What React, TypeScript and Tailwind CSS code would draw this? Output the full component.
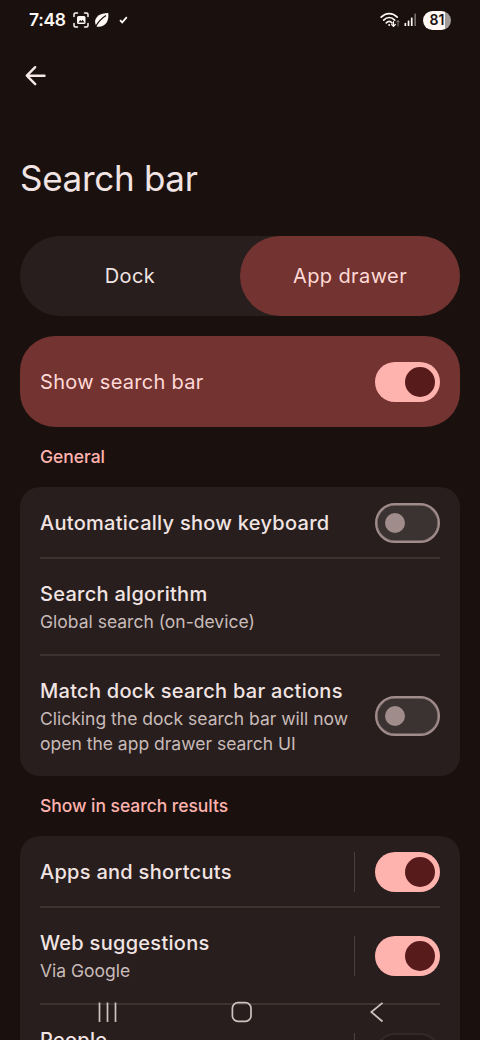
import type { ReactNode } from "react";

type ToggleState = "on" | "off" | "disabled";

function Toggle({ state }: { state: ToggleState }) {
  if (state === "on") {
    return (
      <span className="flex h-10 w-[65px] shrink-0 items-center justify-end rounded-full bg-[#ffb3ae] pr-[5px]">
        <span className="size-[30px] rounded-full bg-[#571b1b]" />
      </span>
    );
  }
  if (state === "disabled") {
    return <span className="h-10 w-[65px] shrink-0 rounded-full border-[2.5px] border-[#332928] bg-[#231918]" />;
  }
  return (
    <span className="flex h-10 w-[65px] shrink-0 items-center rounded-full border-2 border-[#a08c8a] bg-[#3b3331] pl-2 ring-[0.5px] ring-[#a08c8a] ring-inset">
      <span className="size-5 rounded-full bg-[#a08c8a]" />
    </span>
  );
}

function SettingRow({
  title,
  description,
  toggle,
  split = false,
}: {
  title: string;
  description?: string;
  toggle?: ToggleState;
  split?: boolean;
}) {
  return (
    <div className={`flex items-center justify-between ${description ? "py-5" : "box-content h-[69px] pt-px"}`}>
      <div className="w-[314px] shrink-0">
        <p className="text-[20px] font-[450] leading-[30px] tracking-[0.28px] text-[#f1e4e2]">{title}</p>
        {description && (
          <p className="text-[17.5px] leading-[25px] text-[#c9bbb9]">{description}</p>
        )}
      </div>
      {toggle && (
        <div className="-my-2 flex items-center gap-5">
          {split && <span className="h-10 w-px bg-[#4a403e]" />}
          <Toggle state={toggle} />
        </div>
      )}
    </div>
  );
}

function Card({ children }: { children: ReactNode }) {
  return (
    <div className="divide-y-2 divide-[#3d3331] rounded-[20px] bg-[#271e1d] px-5">{children}</div>
  );
}

function SectionLabel({ children }: { children: ReactNode }) {
  return (
    <h2 className="flex h-[60px] items-center pb-px pl-5 text-[17.5px] font-[450] leading-[25px] tracking-[-0.04px] text-[#ffb3ae]">
      {children}
    </h2>
  );
}

function StatusBar() {
  return (
    <div className="flex h-10 items-center justify-between pl-[29px] pr-[29px] text-[#fff8f5]">
      <div className="flex items-center">
        <span className="w-[37px] text-[17.5px] font-semibold leading-5 tracking-[-0.3px]">7:48</span>
        <svg className="ml-[7px]" width="16" height="16" viewBox="0 0 16 16" fill="none">
          <path
            d="M1 4.5V2.5Q1 1 2.5 1H4.5M11.500 1H13.500Q15 1 15 2.500V4.500M15 11.500V13.500Q15 15 13.500 15H11.500M4.500 15H2.500Q1 15 1 13.500V11.500"
            stroke="currentColor"
            strokeWidth="1.5"
            strokeLinecap="round"
          />
          <rect x="4" y="4" width="8.500" height="8" rx="1.500" fill="currentColor" />
          <path d="M5.300 10.500L7.300 8L8.500 9.200L9.700 7.800L11.500 10.500Z" fill="#1a110f" />
        </svg>
        <svg className="ml-[5px]" width="15" height="16" viewBox="0 0 15 16" fill="none">
          <path d="M2.500 14.500C-1.500 8 3 1 14.200 1C15.500 9.500 11 16 2.500 14.500Z" fill="currentColor" />
          <path d="M1 15.500C3.500 11 5.500 7.500 12 3.500" stroke="#1a110f" strokeWidth="1.300" />
        </svg>
        <svg className="ml-[10px]" width="9" height="8" viewBox="0 0 9 8" fill="none">
          <path d="M1 4.200L3.200 6.400L7.800 1.200" stroke="currentColor" strokeWidth="1.800" />
        </svg>
      </div>
      <div className="flex items-center">
        <svg width="21" height="16" viewBox="0 0 21 16" fill="none" stroke="currentColor" strokeLinecap="round">
          <path d="M1.200 5.200C5.800 .4 12.600 .4 17.200 5.200" strokeWidth="1.700" />
          <path d="M3.700 8.100C7.100 4.600 11.300 4.600 14.700 8.100" strokeWidth="1.700" />
          <path d="M6.300 10.800C8.200 9 10.200 9 12 10.800" strokeWidth="1.700" />
          <circle cx="9.200" cy="13" r="1" fill="currentColor" stroke="none" />
          <path d="M13.500 9.500V14M11.700 12.500L13.500 14.400L15.300 12.500" strokeWidth="1.200" />
          <path d="M18 14V9M16.700 10L18 8.700L19.300 10" strokeWidth="1" opacity="0.45" />
        </svg>
        <svg className="ml-[3px]" width="13" height="14" viewBox="0 0 13 14" fill="currentColor">
          <rect x="0.500" y="10" width="1.700" height="3" rx="0.500" />
          <rect x="3.700" y="7.500" width="1.700" height="5.500" rx="0.500" />
          <rect x="6.900" y="4.500" width="1.700" height="8.500" rx="0.500" />
          <rect x="10.300" y="0.500" width="1.700" height="12.500" rx="0.500" opacity="0.4" />
        </svg>
        <span className="ml-[6px] flex h-[19px] w-7 items-center justify-center rounded-full bg-linear-to-r from-[#fff8f5] from-80% to-[#a39b98] to-80% text-[14px] font-semibold leading-none text-[#1a110f]">
          81
        </span>
      </div>
    </div>
  );
}

function NavigationBar() {
  return (
    <nav className="absolute inset-x-0 bottom-0 h-14 text-[#cfc3c1]">
      <svg width="480" height="56" viewBox="0 0 480 56" fill="none" stroke="currentColor">
        <path d="M99.500 18.500V38M107.500 18.500V38M115.500 18.500V38" strokeWidth="1.700" />
        <rect x="232.400" y="18.700" width="18.600" height="18.600" rx="5.500" strokeWidth="1.700" />
        <path d="M382.500 18.800L371.300 28L382.500 37.500" strokeWidth="1.700" />
      </svg>
    </nav>
  );
}

export default function App() {
  return (
    <div className="relative h-[1040px] w-[480px] overflow-hidden bg-[#1a110f] font-['Inter',sans-serif]">
      <StatusBar />
      <header className="h-[196px]">
        <div className="flex h-[72px] items-center pl-[25px]">
          <svg width="22" height="22" viewBox="0 0 22 22" fill="none" stroke="#f4e7e4">
            <path d="M2 10.700H19.500M10.200 2.200L1.800 10.700L10.200 19.200" strokeWidth="2.400" strokeLinecap="round" strokeLinejoin="round" />
          </svg>
        </div>
        <h1 className="mt-[41px] pl-5 text-[35px] font-normal leading-[50px] tracking-[-0.3px] text-[#f1e4e2]">
          Search bar
        </h1>
      </header>
      <main className="px-5">
        <div className="flex h-20 rounded-full bg-[#271e1d] text-[20px] leading-[30px] tracking-[0.4px]">
          <button type="button" className="flex-1 text-[#f1e4e2]">
            Dock
          </button>
          <button type="button" className="flex-1 rounded-full bg-[#733331] text-[#ffdad7]">
            App drawer
          </button>
        </div>
        <div className="mt-5 flex h-[91px] items-center justify-between rounded-[35px] bg-[#733331] px-5">
          <span className="text-[20px] leading-[30px] tracking-[0.3px] text-[#ffdad7]">Show search bar</span>
          <Toggle state="on" />
        </div>
        <SectionLabel>General</SectionLabel>
        <Card>
          <SettingRow title="Automatically show keyboard" toggle="off" />
          <SettingRow title="Search algorithm" description="Global search (on-device)" />
          <SettingRow
            title="Match dock search bar actions"
            description="Clicking the dock search bar will now open the app drawer search UI"
            toggle="off"
          />
        </Card>
        <SectionLabel>Show in search results</SectionLabel>
        <Card>
          <SettingRow title="Apps and shortcuts" toggle="on" split />
          <SettingRow title="Web suggestions" description="Via Google" toggle="on" split />
          <SettingRow title="People" description="Contacts" toggle="disabled" split />
        </Card>
      </main>
      <NavigationBar />
    </div>
  );
}
